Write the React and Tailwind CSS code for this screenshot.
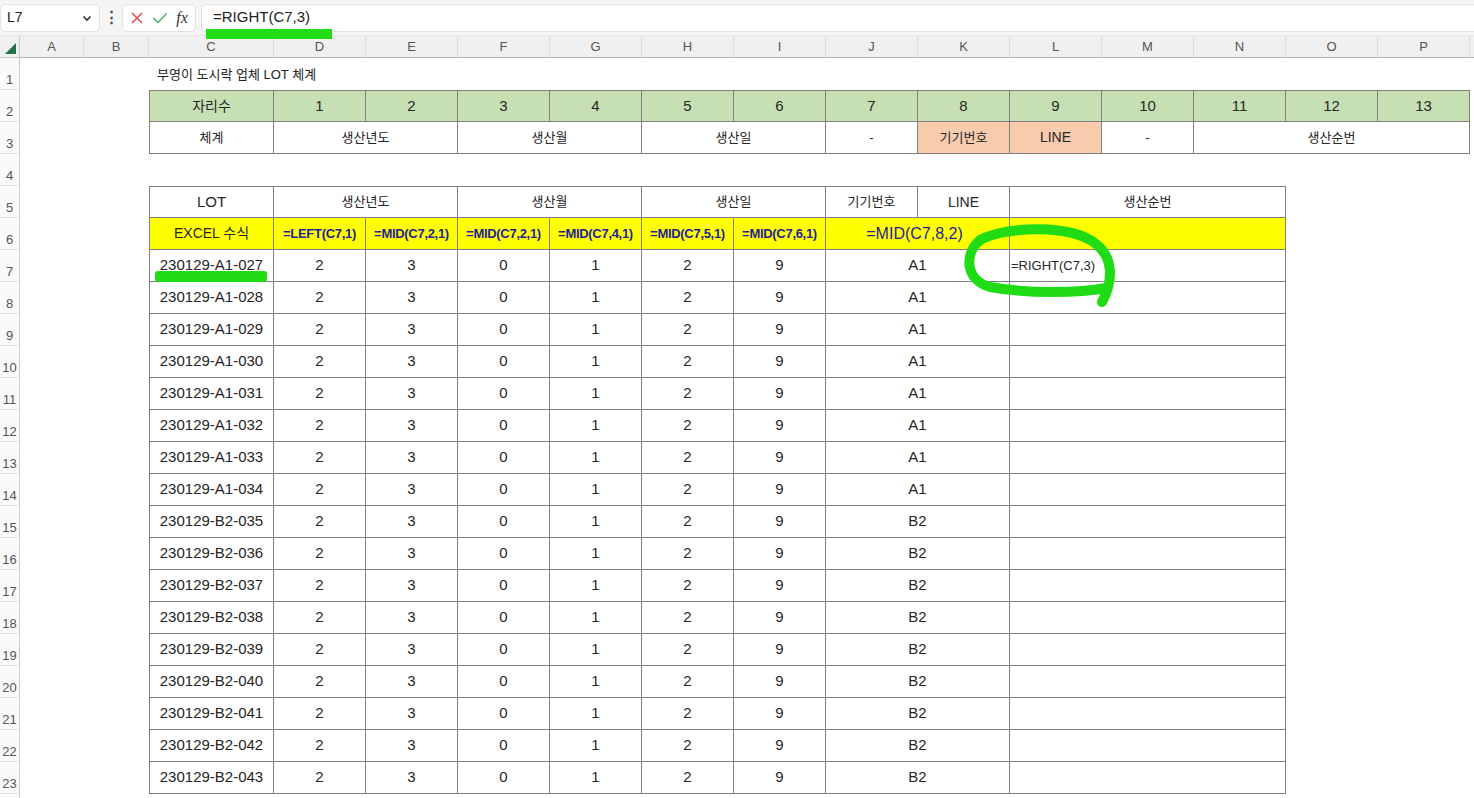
import React from 'react';

const font = "font-['Liberation_Sans','Noto_Sans_CJK_KR',sans-serif]";
const spanCls = {
  1: 'col-span-1',
  2: 'col-span-2',
  3: 'col-span-3',
  4: 'col-span-4',
};
const letters = ['A', 'B', 'C', 'D', 'E', 'F', 'G', 'H', 'I', 'J', 'K', 'L', 'M', 'N', 'O', 'P'];

const lots = [
  ...['027', '028', '029', '030', '031', '032', '033', '034'].map((n) => ['230129-A1-' + n, 'A1']),
  ...['035', '036', '037', '038', '039', '040', '041', '042', '043'].map((n) => ['230129-B2-' + n, 'B2']),
];

const green = 'bg-[#c6e0b4]';
const orange = 'bg-[#f8cbad]';
const yellow = 'bg-[#ffff00]';
const plain = 'text-[15px] text-[#262626]';
const kor = 'text-[13px] text-[#262626]';
const formula = 'text-[13px] font-bold text-[#1f1f99] tracking-[-0.3px]';

// rows: index -> array of cells starting at column C
const rows = {
  2: [
    { t: '자리수', bg: green, cls: 'text-[14px] text-[#262626]' },
    ...Array.from({ length: 13 }, (_, i) => ({ t: String(i + 1), bg: green })),
  ],
  3: [
    { t: '체계', cls: kor },
    { t: '생산년도', span: 2, cls: kor },
    { t: '생산월', span: 2, cls: kor },
    { t: '생산일', span: 2, cls: kor },
    { t: '-', cls: kor },
    { t: '기기번호', bg: orange, cls: kor },
    { t: 'LINE', bg: orange, cls: 'text-[14px] text-[#262626]' },
    { t: '-', cls: kor },
    { t: '생산순번', span: 3, cls: kor },
  ],
  5: [
    { t: 'LOT' },
    { t: '생산년도', span: 2, cls: kor },
    { t: '생산월', span: 2, cls: kor },
    { t: '생산일', span: 2, cls: kor },
    { t: '기기번호', cls: kor },
    { t: 'LINE', cls: 'text-[14px] text-[#262626]' },
    { t: '생산순번', span: 3, cls: kor },
  ],
  6: [
    { t: 'EXCEL 수식', bg: yellow, cls: 'text-[14px] text-[#262626]' },
    { t: '=LEFT(C7,1)', bg: yellow, cls: formula },
    { t: '=MID(C7,2,1)', bg: yellow, cls: formula },
    { t: '=MID(C7,2,1)', bg: yellow, cls: formula },
    { t: '=MID(C7,4,1)', bg: yellow, cls: formula },
    { t: '=MID(C7,5,1)', bg: yellow, cls: formula },
    { t: '=MID(C7,6,1)', bg: yellow, cls: formula },
    { t: '=MID(C7,8,2)', span: 2, bg: yellow, cls: 'text-[16px] text-[#1f1f99] pr-[6px]' },
    { t: '', span: 3, bg: yellow },
  ],
};

lots.forEach(([lot, line], i) => {
  rows[7 + i] = [
    { t: lot },
    { t: '2' },
    { t: '3' },
    { t: '0' },
    { t: '1' },
    { t: '2' },
    { t: '9' },
    { t: line, span: 2 },
    i === 0
      ? { t: '=RIGHT(C7,3)', span: 3, cls: 'text-[13px] text-[#262626] justify-start pl-[1px]' }
      : { t: '', span: 3 },
  ];
});

const topRows = [2, 5];

function Row({ n }) {
  const cells = rows[n];
  return (
    <>
      <div className="col-start-1 bg-[#fafafa] border-r border-b border-r-[#c8c8c8] border-b-[#e3e3e3] flex items-end justify-center text-[13px] leading-[18px] text-[#555]">
        {n < 24 ? n : ''}
      </div>
      {n === 1 && (
        <div className="col-start-4 col-span-6 flex items-center pl-[8px] text-[13px] text-[#222] pt-[1px]">
          부영이 도시락 업체 LOT 체계
        </div>
      )}
      {cells &&
        cells.map((c, i) => (
          <div
            key={i}
            className={[
              i === 0 ? 'col-start-4 border-l' : '',
              spanCls[c.span || 1],
              topRows.includes(n) ? 'border-t' : '',
              'border-r border-b border-[#7f7f7f] flex items-center whitespace-nowrap overflow-hidden',
              c.cls && c.cls.includes('justify-start') ? '' : 'justify-center',
              c.bg || 'bg-white',
              c.cls || plain,
            ].join(' ')}
          >
            {c.t}
          </div>
        ))}
    </>
  );
}

export default function App() {
  const rowNums = Array.from({ length: 24 }, (_, i) => i + 1);
  return (
    <div className={`relative w-[1474px] h-[798px] overflow-hidden bg-white ${font}`}>
      {/* formula bar */}
      <div className="h-[36px] bg-[#f5f5f5] border-b border-[#e6e6e6] flex items-center gap-[5px] pr-0">
        <div className="w-[100px] h-[28px] bg-white rounded-[5px] border border-[#e2e2e2] flex items-center justify-between pl-[6px] pr-[6px] text-[14px] text-[#222]">
          <span>L7</span>
          <svg width="12" height="12" viewBox="0 0 12 12">
            <path d="M2.5 4.5 L6 8 L9.5 4.5" fill="none" stroke="#333" strokeWidth="1.6" />
          </svg>
        </div>
        <div className="w-[12px] text-[#444] text-[15px] font-bold flex justify-center">⋮</div>
        <div className="w-[74px] h-[28px] bg-white rounded-[5px] border border-[#e2e2e2] flex items-center justify-around px-[3px]">
          <svg width="14" height="14" viewBox="0 0 14 14">
            <path d="M2 2 L12 12 M12 2 L2 12" stroke="#e0484e" strokeWidth="1.5" />
          </svg>
          <svg width="16" height="14" viewBox="0 0 16 14">
            <path d="M1.5 7 L6 11.5 L14.5 2.5" fill="none" stroke="#4caf6a" strokeWidth="1.5" />
          </svg>
          <span className="font-['Liberation_Serif',serif] italic text-[16px] text-[#333] leading-none">fx</span>
        </div>
        <div className="flex-1 h-[28px] bg-white rounded-l-[5px] border border-r-0 border-[#e2e2e2] flex items-center pl-[11px] text-[15px] text-[#222]">
          =RIGHT(C7,3)
        </div>
      </div>

      {/* sheet */}
      <div className="grid grid-cols-[20px_64px_65px_125px_repeat(13,92px)_4px] grid-rows-[22px] auto-rows-[32px]">
        <div className="bg-[#f0f0f0] border-r border-b border-[#c8c8c8] flex items-end justify-end pr-[3px] pb-[3px]">
          <svg width="11" height="11" viewBox="0 0 11 11">
            <path d="M11 0 L11 11 L0 11 Z" fill="#217346" />
          </svg>
        </div>
        {letters.map((l) => (
          <div
            key={l}
            className="bg-[#f0f0f0] border-r border-b border-r-[#dcdcdc] border-b-[#b4b4b4] flex items-center justify-center text-[13px] text-[#555]"
          >
            {l}
          </div>
        ))}
        <div className="bg-[#f0f0f0] border-b border-[#b4b4b4]" />
        {rowNums.map((n) => (
          <Row key={n} n={n} />
        ))}
      </div>

      {/* highlighter marks */}
      <svg className="absolute inset-0 pointer-events-none" width="1474" height="798">
        <rect x="206" y="29" width="126" height="10" fill="#1fdc14" />
        <rect x="155" y="271" width="112" height="11" rx="3" fill="#1fdc14" />
        <path
          d="M1102 302 C1113 282 1114 258 1096 244 C1072 224 1006 226 980 240 C964 254 965 280 990 287 C1030 294 1080 293 1106 288"
          fill="none"
          stroke="#1fdc14"
          strokeWidth="10"
          strokeLinecap="round"
        />
      </svg>
    </div>
  );
}
